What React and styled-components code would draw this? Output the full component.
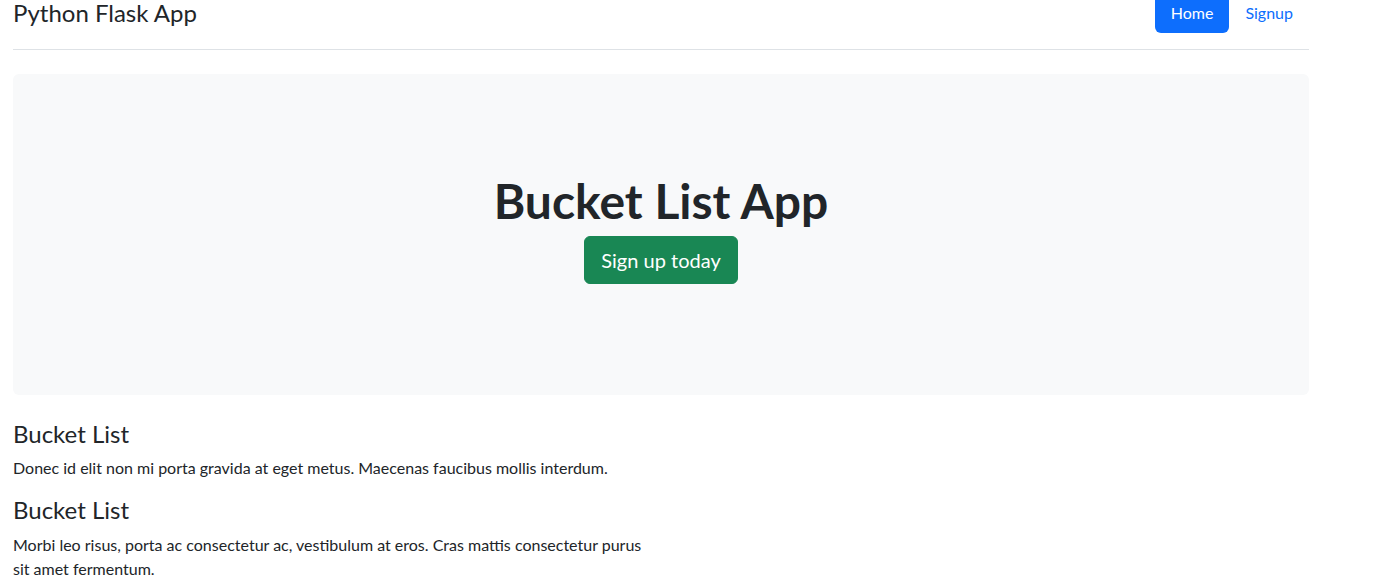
import styled, { createGlobalStyle } from 'styled-components';

const GlobalStyle = createGlobalStyle`
    * { box-sizing: border-box; }
    body {
        margin: 0;
        font-family: Lato, "Noto Sans", sans-serif;
        font-size: 16px;
        line-height: 1.5;
        color: #212529;
        background: #fff;
    }
`;

const Container = styled.div`
    width: 1322px;
    padding: 0 13px;
`;

const Header = styled.header`
    display: flex;
    align-items: center;
    justify-content: space-between;
    margin-top: -7px;
    padding-bottom: 16px;
    margin-bottom: 24px;
    border-bottom: 1px solid #dee2e6;
`;

const Brand = styled.a`
    font-size: 24px;
    line-height: 1.2;
    color: #212529;
    text-decoration: none;
`;

const Nav = styled.nav`
    display: flex;
`;

const NavLink = styled.a`
    display: block;
    padding: 8px 16px;
    border-radius: 6px;
    text-decoration: none;
    color: ${(p) => (p.$active ? '#fff' : '#0d6efd')};
    background: ${(p) => (p.$active ? '#0d6efd' : 'transparent')};
`;

const Jumbotron = styled.section`
    background: #f8f9fa;
    border-radius: 6px;
    padding: 98px 16px 111px;
    text-align: center;
`;

const Title = styled.h1`
    margin: 0 0 6px;
    font-size: 48px;
    font-weight: 700;
    line-height: 1.2;
`;

const CtaButton = styled.a`
    display: inline-block;
    padding: 8px 16px;
    font-size: 20px;
    line-height: 1.5;
    color: #fff;
    background: #198754;
    border: 1px solid #198754;
    border-radius: 6px;
    text-decoration: none;
`;

const Columns = styled.div`
    display: grid;
    grid-template-columns: 636px 1fr;
    margin-top: 25px;
`;

const Column = styled.div``;

const ItemTitle = styled.h4`
    margin: 0 0 8px;
    font-size: 24px;
    font-weight: 400;
    line-height: 1.2;
`;

const ItemText = styled.p`
    margin: 0 0 16px;
`;

const items = [
    'Donec id elit non mi porta gravida at eget metus. Maecenas faucibus mollis interdum.',
    'Morbi leo risus, porta ac consectetur ac, vestibulum at eros. Cras mattis consectetur purus sit amet fermentum.',
];

const App = () => {
    return (
        <Container>
            <GlobalStyle />
            <Header>
                <Brand href="/">Python Flask App</Brand>
                <Nav>
                    <NavLink href="/" $active>
                        Home
                    </NavLink>
                    <NavLink href="/signup">Signup</NavLink>
                </Nav>
            </Header>
            <Jumbotron>
                <Title>Bucket List App</Title>
                <CtaButton href="/signup">Sign up today</CtaButton>
            </Jumbotron>
            <Columns>
                <Column>
                    {items.map((text, i) => (
                        <div key={i}>
                            <ItemTitle>Bucket List</ItemTitle>
                            <ItemText>{text}</ItemText>
                        </div>
                    ))}
                </Column>
            </Columns>
        </Container>
    );
};

export default App;
